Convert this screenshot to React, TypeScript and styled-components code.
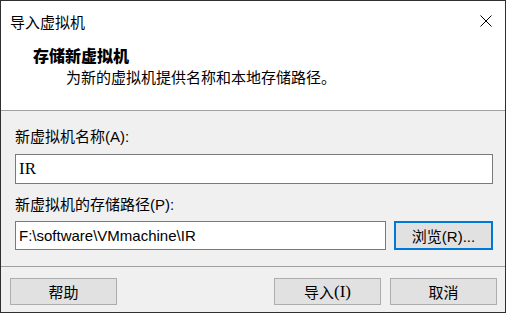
import styled, { createGlobalStyle } from "styled-components";

const GlobalStyle = createGlobalStyle`
  body {
    margin: 0;
    background: #ffffff;
    font-family: "Liberation Sans", "Noto Sans CJK SC", sans-serif;
    color: #000;
  }
`;

const Window = styled.div`
  display: flex;
  flex-direction: column;
  width: 506px;
  height: 313px;
  box-sizing: border-box;
  border: 1px solid #2f2f2f;
  background: #f0f0f0;
`;

const Top = styled.div`
  display: flex;
  flex-direction: column;
  height: 109px;
  background: #ffffff;
  border-bottom: 1px solid #a0a0a0;
`;

const TitleBar = styled.div`
  display: flex;
  align-items: center;
  justify-content: space-between;
  box-sizing: border-box;
  height: 38px;
  padding: 2px 0 0 9px;
  font-size: 15px;
`;

const CloseButton = styled.div`
  display: flex;
  align-items: center;
  justify-content: center;
  width: 38px;
  height: 100%;
`;

const Header = styled.div`
  display: flex;
  flex-direction: column;
  padding: 8px 0 0 32px;
`;

const Heading = styled.div`
  font-size: 16px;
  font-weight: 900;
  line-height: 20px;
`;

const Subtitle = styled.div`
  margin-top: 1px;
  padding-left: 33px;
  font-size: 15px;
  line-height: 20px;
`;

const Content = styled.div`
  flex: 1;
  display: flex;
  flex-direction: column;
  padding: 16px 12px 0 14px;
`;

const Label = styled.div<{ $gap?: number }>`
  font-size: 15px;
  line-height: 20px;
  margin-top: ${(p) => p.$gap ?? 0}px;
`;

const Field = styled.div<{ $serif?: boolean }>`
  display: flex;
  align-items: center;
  box-sizing: border-box;
  height: 30px;
  padding-left: 3px;
  background: #ffffff;
  border: 1px solid #7a7a7a;
  font-size: ${(p) => (p.$serif ? 17 : 15)}px;
  font-family: ${(p) =>
    p.$serif
      ? `"Liberation Serif", "Noto Sans CJK SC", serif`
      : `"Liberation Sans", "Noto Sans CJK SC", sans-serif`};
`;

const NameField = styled(Field)`
  margin-top: 7px;
`;

const PathRow = styled.div`
  display: flex;
  gap: 8px;
  margin-top: 6px;
  height: 29px;
`;

const PathField = styled(Field)`
  flex: 1;
  height: 29px;
`;

const Button = styled.div<{ $focus?: boolean }>`
  display: flex;
  align-items: center;
  justify-content: center;
  box-sizing: border-box;
  width: ${(p) => (p.$focus ? 99 : 107)}px;
  height: ${(p) => (p.$focus ? 29 : 27)}px;
  background: #e1e1e1;
  border: ${(p) => (p.$focus ? "2px solid #0078d7" : "1px solid #adadad")};
  font-size: 15px;
`;

const SerifPart = styled.span`
  font-family: "Liberation Serif", serif;
  font-size: 17px;
`;

const Footer = styled.div`
  display: flex;
  justify-content: space-between;
  height: 46px;
  box-sizing: border-box;
  padding: 11px 8px 0 9px;
  border-top: 1px solid #a0a0a0;
`;

const ButtonGroup = styled.div`
  display: flex;
  gap: 9px;
`;

export default function App() {
  return (
    <>
      <GlobalStyle />
      <Window>
        <Top>
          <TitleBar>
            <span>导入虚拟机</span>
            <CloseButton>
              <svg width="12" height="12" viewBox="0 0 12 12">
                <path d="M0.5 0.5 L11.5 11.5 M11.5 0.5 L0.5 11.5" stroke="#000" strokeWidth="1" fill="none" />
              </svg>
            </CloseButton>
          </TitleBar>
          <Header>
            <Heading>存储新虚拟机</Heading>
            <Subtitle>为新的虚拟机提供名称和本地存储路径。</Subtitle>
          </Header>
        </Top>
        <Content>
          <Label>新虚拟机名称(A):</Label>
          <NameField $serif>IR</NameField>
          <Label $gap={11}>新虚拟机的存储路径(P):</Label>
          <PathRow>
            <PathField>F:\software\VMmachine\IR</PathField>
            <Button $focus>浏览(R)...</Button>
          </PathRow>
        </Content>
        <Footer>
          <Button>帮助</Button>
          <ButtonGroup>
            <Button>
              导入<SerifPart>(I)</SerifPart>
            </Button>
            <Button>取消</Button>
          </ButtonGroup>
        </Footer>
      </Window>
    </>
  );
}
